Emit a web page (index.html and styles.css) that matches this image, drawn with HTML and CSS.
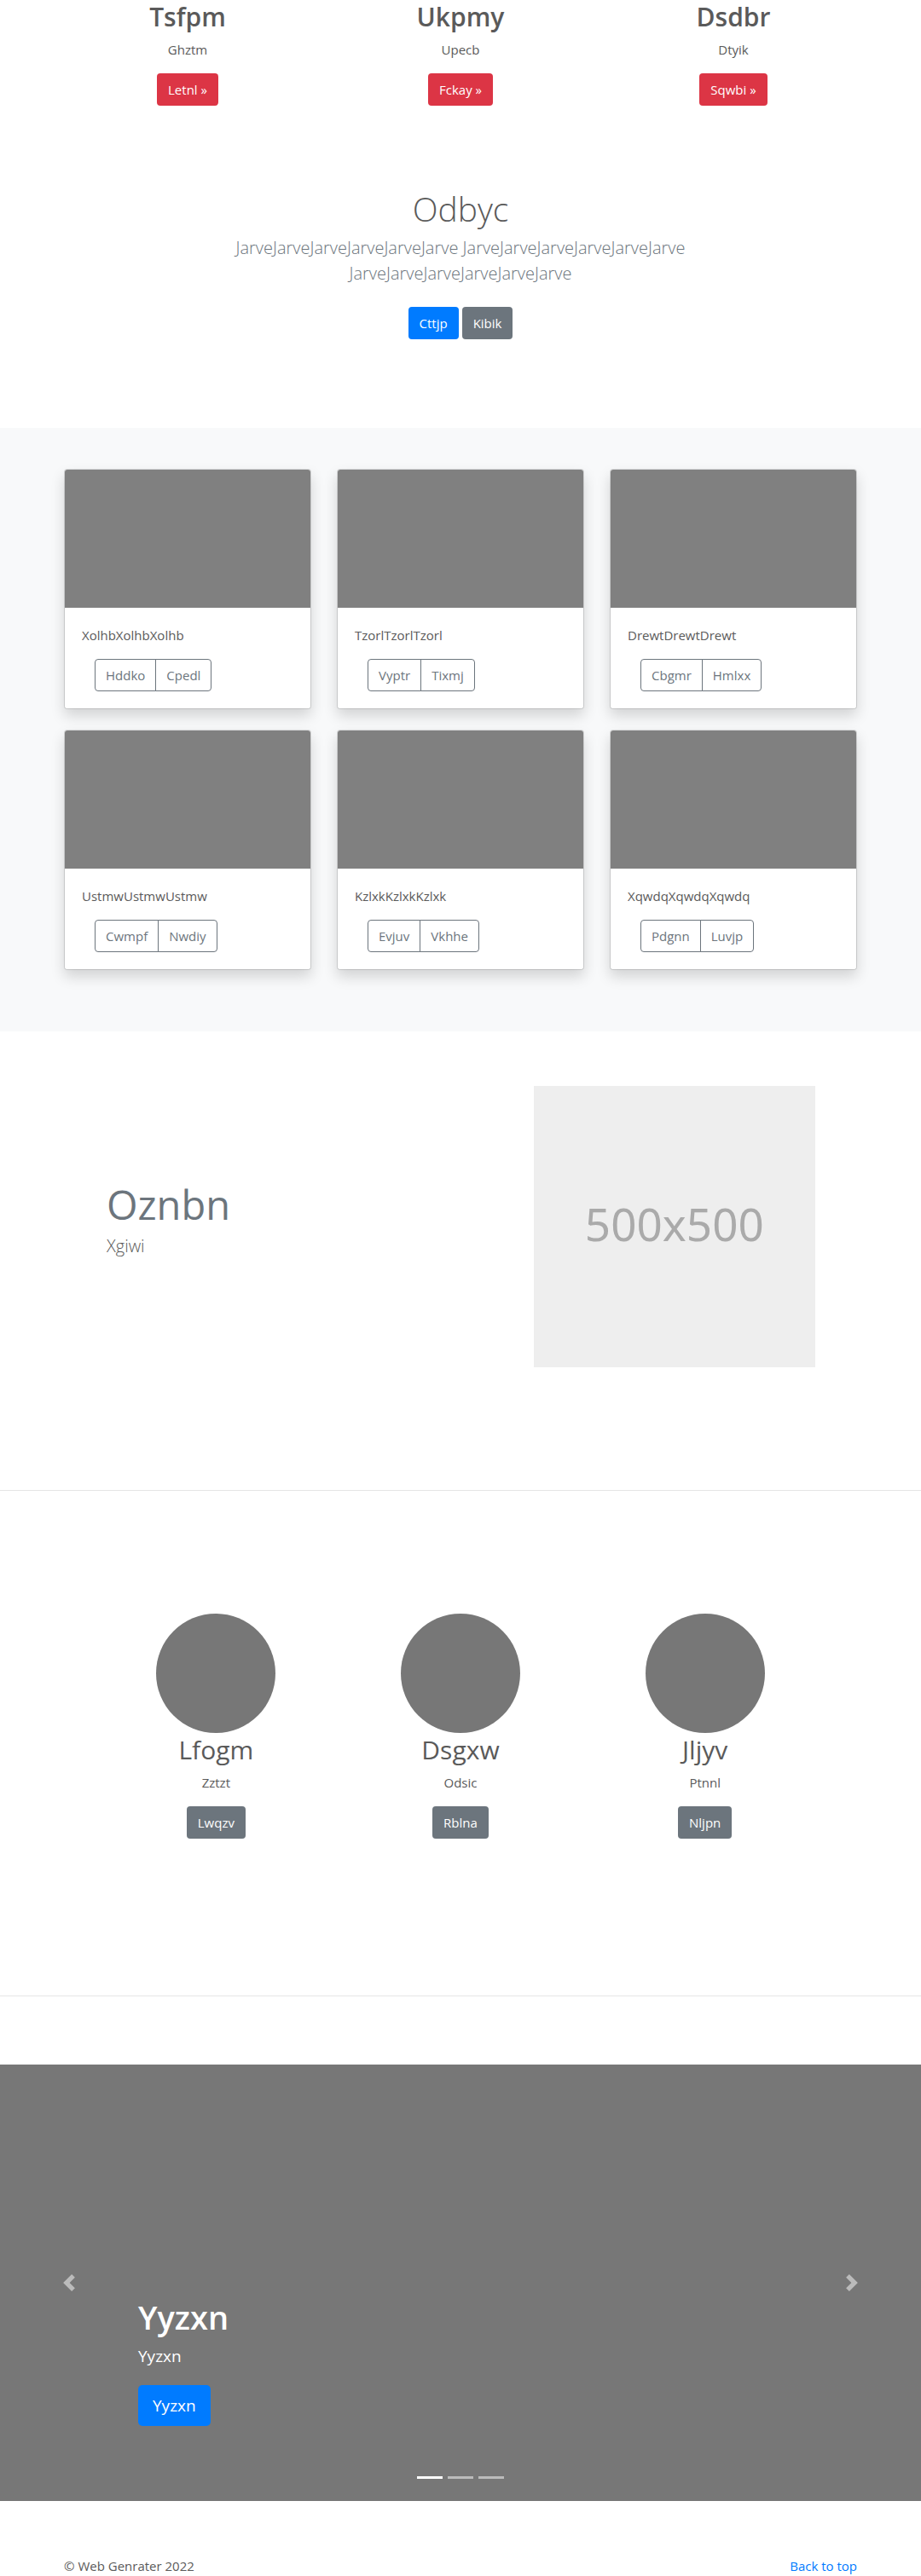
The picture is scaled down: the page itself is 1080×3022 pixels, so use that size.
FILE: index.html
```html
<!DOCTYPE html>
<html lang="en">
<head>
<meta charset="utf-8">
<meta name="viewport" content="width=device-width, initial-scale=1">
<title>Web Genrater</title>
<link rel="stylesheet" href="styles.css">
</head>
<body>
<main>
  <section class="container features">
    <div class="feature">
      <h2 class="heading heading-strong">Tsfpm</h2>
      <p>Ghztm</p>
      <a class="btn btn-danger" href="#">Letnl »</a>
    </div>
    <div class="feature">
      <h2 class="heading heading-strong">Ukpmy</h2>
      <p>Upecb</p>
      <a class="btn btn-danger" href="#">Fckay »</a>
    </div>
    <div class="feature">
      <h2 class="heading heading-strong">Dsdbr</h2>
      <p>Dtyik</p>
      <a class="btn btn-danger" href="#">Sqwbi »</a>
    </div>
  </section>

  <section class="intro">
    <h1 class="intro-title">Odbyc</h1>
    <p class="lead intro-text">JarveJarveJarveJarveJarveJarve JarveJarveJarveJarveJarveJarve JarveJarveJarveJarveJarveJarve</p>
    <div class="intro-actions">
      <a class="btn btn-primary" href="#">Cttjp</a>
      <a class="btn btn-secondary" href="#">Kibik</a>
    </div>
  </section>

  <section class="album">
    <div class="container album-grid">
      <article class="card">
        <div class="card-image"></div>
        <div class="card-body">
          <p>XolhbXolhbXolhb</p>
          <div class="btn-group"><button type="button" class="btn btn-outline">Hddko</button><button type="button" class="btn btn-outline">Cpedl</button></div>
        </div>
      </article>
      <article class="card">
        <div class="card-image"></div>
        <div class="card-body">
          <p>TzorlTzorlTzorl</p>
          <div class="btn-group"><button type="button" class="btn btn-outline">Vyptr</button><button type="button" class="btn btn-outline">Tixmj</button></div>
        </div>
      </article>
      <article class="card">
        <div class="card-image"></div>
        <div class="card-body">
          <p>DrewtDrewtDrewt</p>
          <div class="btn-group"><button type="button" class="btn btn-outline">Cbgmr</button><button type="button" class="btn btn-outline">Hmlxx</button></div>
        </div>
      </article>
      <article class="card">
        <div class="card-image"></div>
        <div class="card-body">
          <p>UstmwUstmwUstmw</p>
          <div class="btn-group"><button type="button" class="btn btn-outline">Cwmpf</button><button type="button" class="btn btn-outline">Nwdiy</button></div>
        </div>
      </article>
      <article class="card">
        <div class="card-image"></div>
        <div class="card-body">
          <p>KzlxkKzlxkKzlxk</p>
          <div class="btn-group"><button type="button" class="btn btn-outline">Evjuv</button><button type="button" class="btn btn-outline">Vkhhe</button></div>
        </div>
      </article>
      <article class="card">
        <div class="card-image"></div>
        <div class="card-body">
          <p>XqwdqXqwdqXqwdq</p>
          <div class="btn-group"><button type="button" class="btn btn-outline">Pdgnn</button><button type="button" class="btn btn-outline">Luvjp</button></div>
        </div>
      </article>
    </div>
  </section>

  <section class="container-narrow featurette">
    <div class="featurette-copy">
      <h2 class="featurette-heading">Oznbn</h2>
      <p class="lead">Xgiwi</p>
    </div>
    <div class="placeholder">500x500</div>
  </section>

  <hr class="divider">

  <section class="container-narrow marketing">
    <div class="profile">
      <div class="avatar"></div>
      <h2 class="heading">Lfogm</h2>
      <p>Zztzt</p>
      <a class="btn btn-secondary" href="#">Lwqzv</a>
    </div>
    <div class="profile">
      <div class="avatar"></div>
      <h2 class="heading">Dsgxw</h2>
      <p>Odsic</p>
      <a class="btn btn-secondary" href="#">Rblna</a>
    </div>
    <div class="profile">
      <div class="avatar"></div>
      <h2 class="heading">Jljyv</h2>
      <p>Ptnnl</p>
      <a class="btn btn-secondary" href="#">Nljpn</a>
    </div>
  </section>

  <hr class="divider divider-last">

  <section class="carousel">
    <button type="button" class="carousel-control" aria-label="Previous">
      <svg viewBox="0 0 8 8" width="20" height="20" fill="currentColor" aria-hidden="true"><path d="M5.25 0l-4 4 4 4 1.500-1.500-2.500-2.500 2.500-2.500-1.500-1.500z"/></svg>
    </button>
    <div class="carousel-caption">
      <h1 class="carousel-title">Yyzxn</h1>
      <p class="carousel-text">Yyzxn</p>
      <a class="btn btn-primary btn-lg" href="#">Yyzxn</a>
    </div>
    <button type="button" class="carousel-control" aria-label="Next">
      <svg viewBox="0 0 8 8" width="20" height="20" fill="currentColor" aria-hidden="true"><path d="M2.750 0l-1.500 1.500 2.500 2.500-2.500 2.500 1.500 1.500 4-4-4-4z"/></svg>
    </button>
    <div class="indicators">
      <span class="indicator active"></span>
      <span class="indicator"></span>
      <span class="indicator"></span>
    </div>
  </section>
</main>

<footer class="container footer">
  <p>© Web Genrater 2022</p>
  <a class="link" href="#">Back to top</a>
</footer>
</body>
</html>
```
FILE: styles.css
```css
* {
  box-sizing: border-box;
}

body {
  margin: 0;
  background: #fff;
  color: #5a5a5a;
  font-family: "Segoe UI", "Open Sans", "Noto Sans", sans-serif;
  font-size: 15px;
  line-height: 24px;
}

h1,
h2,
p {
  margin: 0;
}

.container {
  max-width: 960px;
  margin: 0 auto;
  padding: 0 15px;
}

.container-narrow {
  max-width: 860px;
  margin: 0 auto;
}

/* Buttons */

.btn {
  display: inline-block;
  padding: 6px 12px;
  border: 1px solid transparent;
  border-radius: 4px;
  font: inherit;
  text-align: center;
  text-decoration: none;
  color: #fff;
  cursor: pointer;
}

.btn-danger {
  background: #dc3545;
}

.btn-primary {
  background: #007bff;
}

.btn-secondary {
  background: #6c757d;
}

.btn-outline {
  background: transparent;
  border-color: #6c757d;
  color: #6c757d;
}

.btn-lg {
  padding: 8px 16px;
  border-radius: 5px;
  font-size: 19px;
  line-height: 30px;
}

.btn-group {
  display: flex;
  margin-left: 15px;
}

.btn-group .btn:first-child {
  border-radius: 4px 0 0 4px;
}

.btn-group .btn:last-child {
  margin-left: -1px;
  border-radius: 0 4px 4px 0;
}

/* Shared text */

.heading {
  margin-bottom: 6px;
  font-size: 30px;
  line-height: 40px;
  font-weight: 400;
}

.heading-strong {
  font-weight: 600;
}

.lead {
  font-size: 20px;
  line-height: 30px;
  font-weight: 300;
}

/* Features */

.features {
  display: grid;
  grid-template-columns: repeat(3, 1fr);
  gap: 30px;
  text-align: center;
}

.feature p,
.profile p {
  margin-bottom: 16px;
}

/* Intro */

.intro {
  padding: 96px 16px 104px;
  text-align: center;
}

.intro-title {
  margin-bottom: 6px;
  font-size: 39px;
  line-height: 50px;
  font-weight: 300;
}

.intro-text {
  max-width: 610px;
  margin: 0 auto 24px;
  color: #6c757d;
}

.intro-actions {
  display: flex;
  justify-content: center;
  gap: 4px;
}

/* Album */

.album {
  padding: 48px 0 72px;
  background: #f8f9fa;
}

.album-grid {
  display: grid;
  grid-template-columns: repeat(3, 1fr);
  gap: 24px 30px;
}

.card {
  border: 1px solid rgba(0, 0, 0, 0.125);
  border-radius: 4px;
  background: #fff;
  background-clip: padding-box;
  box-shadow: 0 8px 16px rgba(0, 0, 0, 0.15);
}

.card-image {
  height: 162px;
  border-radius: 3px 3px 0 0;
  background: #808080;
}

.card-body {
  padding: 20px;
}

.card-body p {
  margin-bottom: 16px;
}

/* Featurette */

.featurette {
  display: grid;
  grid-template-columns: 7fr 5fr;
  align-items: center;
  padding-top: 64px;
}

.featurette-copy {
  padding: 0 15px 18px;
}

.featurette-heading {
  margin-bottom: 4px;
  font-size: 47px;
  line-height: 60px;
  font-weight: 400;
  color: #6c757d;
}

.placeholder {
  display: grid;
  place-items: center;
  margin: 0 14px;
  padding-bottom: 6px;
  aspect-ratio: 1;
  background: #eee;
  color: #aaa;
  font-family: "Noto Sans", sans-serif;
  font-size: 53px;
}

.divider {
  height: 1px;
  margin: 144px 0;
  border: 0;
  background: rgba(0, 0, 0, 0.1);
}

.divider-last {
  margin-bottom: 80px;
}

/* Marketing */

.marketing {
  display: grid;
  grid-template-columns: repeat(3, 1fr);
  padding-bottom: 40px;
  text-align: center;
}

.avatar {
  width: 140px;
  height: 140px;
  margin: 0 auto;
  border-radius: 50%;
  background: #777;
}

/* Carousel */

.carousel {
  position: relative;
  display: grid;
  grid-template-columns: 15% 1fr 15%;
  min-height: 512px;
  background: #777;
  color: #fff;
}

.carousel-control {
  display: grid;
  place-items: center;
  padding: 0;
  border: 0;
  background: none;
  color: #fff;
  opacity: 0.5;
  cursor: pointer;
}

.carousel-caption {
  align-self: end;
  padding-bottom: 88px;
}

.carousel-title {
  margin-bottom: 6px;
  font-size: 38px;
  line-height: 50px;
  font-weight: 600;
}

.carousel-text {
  margin-bottom: 19px;
  font-size: 19px;
  line-height: 30px;
}

.carousel-text,
.carousel .btn {
  font-weight: 500;
}

.indicators {
  position: absolute;
  right: 0;
  bottom: 26px;
  left: 0;
  display: flex;
  justify-content: center;
  gap: 6px;
}

.indicator {
  width: 30px;
  height: 3px;
  background: #fff;
  opacity: 0.5;
}

.indicator.active {
  opacity: 1;
}

/* Footer */

.footer {
  display: flex;
  justify-content: space-between;
  padding-top: 64px;
}

.link {
  color: #007bff;
  text-decoration: none;
}
```
